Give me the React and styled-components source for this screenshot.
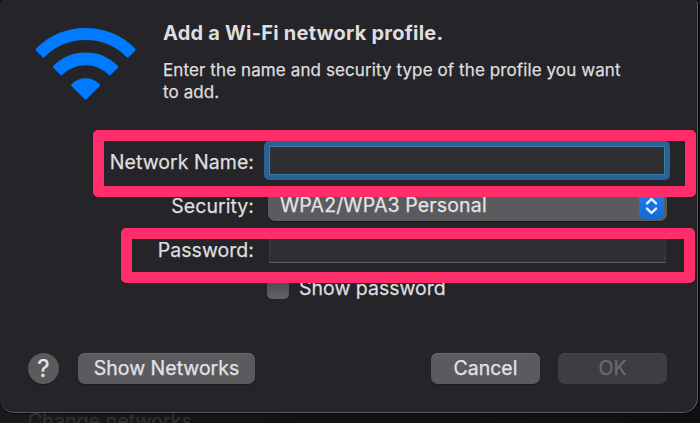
import React, { useState } from 'react';
import styled, { createGlobalStyle } from 'styled-components';

const GlobalStyle = createGlobalStyle`
  * {
    box-sizing: border-box;
  }

  body {
    margin: 0;
    background: #131214;
    overflow: hidden;
    font-family: Inter, 'Liberation Sans', sans-serif;
    color: #dededf;
    -webkit-text-stroke: 0.25px;
  }
`;

const Screen = styled.div`
  position: relative;
  width: 700px;
  height: 423px;
  overflow: hidden;
  background: linear-gradient(90deg, #1a1a1c 0, #131113 300px, #110f11 100%);
`;

const Dialog = styled.main`
  width: 698px;
  height: 413px;
  padding: 22px 30px 0 28px;
  background: #252429;
  border: 1px solid #5b5b5f;
  border-top: 0;
  border-left: 0;
  border-radius: 3px 4px 15px 14px;
  box-shadow: 0 0 0 1px #060607;
`;

const Header = styled.header`
  display: flex;
  height: 119px;
  padding-left: 7px;
`;

const WifiIcon = styled.svg`
  width: 101px;
  height: 73px;
  margin: 5px 27px 0 0;
  overflow: visible;
  fill: #007bff;
  stroke: #007bff;
  stroke-width: 3;
  stroke-linejoin: round;
`;

const Title = styled.h1`
  margin: 0;
  font-size: 20px;
  line-height: 23px;
  font-weight: 700;
  letter-spacing: 0.22px;
  white-space: nowrap;
  -webkit-text-stroke: 0;
`;

const Description = styled.p`
  margin: 14px 0 0;
  font-size: 17px;
  line-height: 22px;
  letter-spacing: 0.1px;
  white-space: nowrap;
`;

const Row = styled.div`
  display: flex;
  align-items: center;
  height: ${props => props.$height}px;
  margin-bottom: ${props => props.$gap || 0}px;
  padding-left: ${props => props.$indent || 0}px;
`;

const Label = styled.label`
  flex: none;
  width: 226px;
  margin-right: ${props => props.$space}px;
  padding-top: ${props => props.$drop || 0}px;
  text-align: right;
  font-size: 19.5px;
  line-height: 24px;
  letter-spacing: 0.05px;
  white-space: nowrap;
`;

const Input = styled.input`
  flex: none;
  width: 397px;
  height: 30px;
  padding: 0 6px;
  background: #302f34;
  border: 1px solid #3b3a3f;
  border-bottom-color: #5f5e63;
  outline: 0;
  color: inherit;
  font: inherit;
`;

const FocusedInput = styled(Input)`
  width: 406px;
  height: 39px;
  border: 5px solid #286396;
  border-radius: 5px;
  box-shadow: inset 0 0 0 1px #3e79a6;
`;

const Select = styled.button`
  display: flex;
  flex: none;
  align-items: center;
  justify-content: space-between;
  width: 399px;
  height: 31px;
  padding: 0 3px 0 12px;
  border: 0;
  border-radius: 7px;
  background: #5b5a5f;
  box-shadow: 0 1px 1px #1b1b1e;
  color: #e3e3e4;
  font: 19.5px/24px Inter, 'Liberation Sans', sans-serif;
  letter-spacing: 0.15px;
`;

const SelectValue = styled.span`
  padding-bottom: 1px;
`;

const Stepper = styled.span`
  display: flex;
  align-items: center;
  justify-content: center;
  width: 25px;
  height: 26px;
  border-radius: 6px;
  background: linear-gradient(#1b7df0, #176ad0);
`;

const Checkbox = styled.span`
  width: 22px;
  height: 22px;
  margin-right: 10px;
  border-radius: 5px;
  background: linear-gradient(#48474c, #626166);
`;

const CheckLabel = styled.span`
  font-size: 19.5px;
  line-height: 24px;
`;

const Footer = styled.footer`
  display: flex;
  margin-top: 54px;
`;

const Button = styled.button`
  flex: none;
  width: ${props => props.$width}px;
  height: 31px;
  margin-left: ${props => props.$space || 0}px;
  padding: 0 0 2px;
  border: 0;
  border-radius: 7px;
  background: #5b5a5f;
  box-shadow: inset 0 1px 0 #6e6d71, 0 1px 1px #1c1b1f;
  color: #e3e3e4;
  font: 19.5px/28px Inter, 'Liberation Sans', sans-serif;
  white-space: nowrap;

  &:disabled {
    background: #3e3d41;
    box-shadow: inset 0 1px 0 #48474b;
    color: #6c6b6f;
  }
`;

const HelpButton = styled(Button)`
  padding: 0;
  border-radius: 50%;
  box-shadow: 0 1px 1px #1c1b1f;
  font-size: 24px;
`;

const Highlight = styled.div`
  position: absolute;
  left: ${props => props.$left}px;
  top: ${props => props.$top}px;
  width: ${props => props.$width}px;
  height: ${props => props.$height}px;
  border: 11px solid #ff2e6b;
  border-radius: 5px;
  pointer-events: none;
`;

const Backdrop = styled.div`
  padding-left: 28px;
  font-size: 19.5px;
  line-height: 16px;
  letter-spacing: 0.1px;
  color: #303032;
  white-space: nowrap;
`;

const Wifi = () => (
  <WifiIcon viewBox="-0.3 0 101 73" aria-hidden="true">
    <path d="M1.9 22.6A68.5 68.5 0 0 1 98.7 22.6L92.4 28.9A59.5 59.5 0 0 0 8.2 28.9Z" />
    <path d="M19.2 39.9A44 44 0 0 1 81.4 39.9L74.5 46.8A34.2 34.2 0 0 0 26.1 46.8Z" />
    <path d="M37.4 58.1A18.2 18.2 0 0 1 63.2 58.1L50.3 71Z" />
  </WifiIcon>
);

const App = () => {
  const [name, setName] = useState('');
  const [password, setPassword] = useState('');

  return (
    <Screen>
      <GlobalStyle />
      <Dialog>
        <Header>
          <Wifi />
          <div>
            <Title>Add a Wi-Fi network profile.</Title>
            <Description>
              Enter the name and security type of the profile you want
              <br />
              to add.
            </Description>
          </div>
        </Header>

        <Row $height={39} $gap={10}>
          <Label $space={10} $drop={3} htmlFor="name">Network Name:</Label>
          <FocusedInput id="name" value={name} onChange={(e) => setName(e.target.value)} />
        </Row>
        <Row $height={31} $gap={12}>
          <Label $space={14}>Security:</Label>
          <Select type="button">
            <SelectValue>WPA2/WPA3 Personal</SelectValue>
            <Stepper>
              <svg width="13" height="18" viewBox="0 0 13 18" fill="none" stroke="#e8f1fc" strokeWidth="2.4" strokeLinecap="round" strokeLinejoin="round">
                <path d="M2 6.4L6.5 2L11 6.4M2 11.6L6.5 16L11 11.6" />
              </svg>
            </Stepper>
          </Select>
        </Row>
        <Row $height={30} $gap={14}>
          <Label $space={15} $drop={3} htmlFor="password">Password:</Label>
          <Input id="password" type="password" value={password} onChange={(e) => setPassword(e.target.value)} />
        </Row>
        <Row $height={22} $indent={239}>
          <Checkbox />
          <CheckLabel>Show password</CheckLabel>
        </Row>

        <Footer>
          <HelpButton $width={31} aria-label="Help">?</HelpButton>
          <Button $width={177} $space={19}>Show Networks</Button>
          <Button $width={109} $space={176}>Cancel</Button>
          <Button $width={109} $space={18} disabled>OK</Button>
        </Footer>
      </Dialog>
      <Backdrop>Change networks</Backdrop>
      <Highlight $left={92.5} $top={130} $width={603.5} $height={67} />
      <Highlight $left={121} $top={227.5} $width={574} $height={55} />
    </Screen>
  );
};

export default App;
